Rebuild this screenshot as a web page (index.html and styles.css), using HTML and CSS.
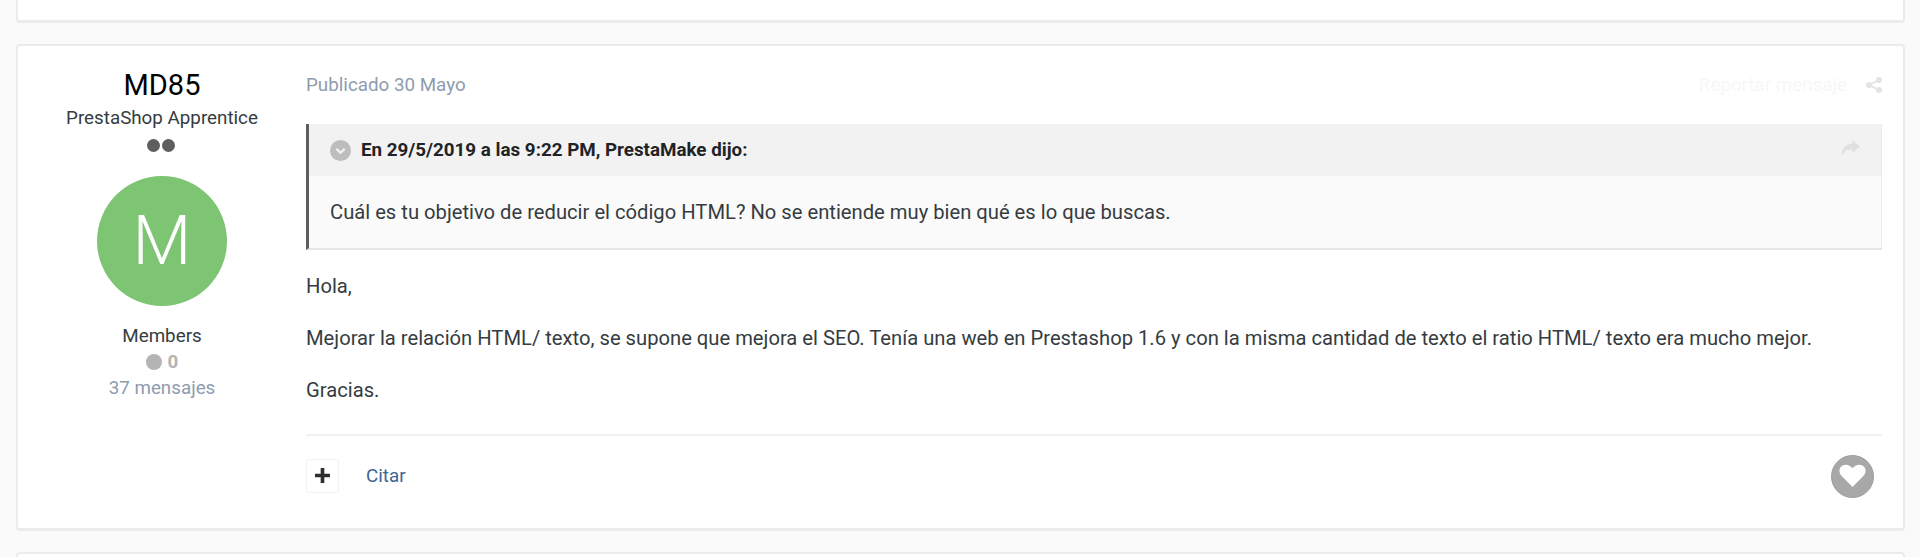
FILE: index.html
```html
<!DOCTYPE html>
<html lang="es">
<head>
<meta charset="utf-8">
<title>MD85</title>
<link rel="stylesheet" href="styles.css">
</head>
<body>
<div class="card card-stub"></div>
<article class="card post">
  <aside class="author">
    <h3 class="name">MD85</h3>
    <div class="rank">PrestaShop Apprentice</div>
    <div class="pips"><span class="pip"></span><span class="pip"></span></div>
    <div class="avatar"><span>M</span></div>
    <div class="group">Members</div>
    <div class="rep"><span class="rep-dot"></span><span>0</span></div>
    <div class="count">37 mensajes</div>
  </aside>
  <div class="main">
    <div class="meta">
      <span class="date">Publicado 30 Mayo</span>
      <div class="tools">
        <span class="report">Reportar mensaje</span>
        <svg class="share" viewBox="0 0 16 16" width="16" height="16"><circle cx="13" cy="3" r="3"/><circle cx="3" cy="8" r="3"/><circle cx="13" cy="13" r="3"/><path d="M13 3 3 8l10 5" fill="none" stroke="#e3e3e3" stroke-width="1.8"/></svg>
      </div>
    </div>
    <blockquote class="quote">
      <div class="quote-head">
        <svg class="toggle" viewBox="0 0 20 20" width="21" height="21"><circle cx="10" cy="10" r="10" fill="#bdbdbd"/><path d="M6 8.5l4 3.6 4-3.6" fill="none" stroke="#f1f1f1" stroke-width="2.2"/></svg>
        <strong class="quote-title">En 29/5/2019 a las 9:22 PM, PrestaMake dijo:</strong>
        <svg class="goto" viewBox="0 0 20 18" width="19" height="17"><path d="M12 0l8 7-8 7v-4C7 10 3 11 1 17.500 0 10 4 4 12 4z"/></svg>
      </div>
      <p class="quote-body">Cuál es tu objetivo de reducir el código HTML? No se entiende muy bien qué es lo que buscas.</p>
    </blockquote>
    <div class="content">
      <p>Hola,</p>
      <p>Mejorar la relación HTML/ texto, se supone que mejora el SEO. Tenía una web en Prestashop 1.6 y con la misma cantidad de texto el ratio HTML/ texto era mucho mejor.</p>
      <p>Gracias.</p>
    </div>
    <div class="controls">
      <div class="left">
        <span class="plus"><svg viewBox="0 0 14 14" width="15" height="15"><path d="M7 0v14M0 7h14" stroke="#2f2f2f" stroke-width="3.400" fill="none"/></svg></span>
        <a class="cite">Citar</a>
      </div>
      <span class="like"><svg viewBox="0 0 24 22" width="27" height="24"><path d="M12 21 2.500 11.500C-1 8-.5 3.500 2.500 1.600 5.500-.3 9.500.5 12 4c2.500-3.500 6.500-4.300 9.500-2.400 3 1.900 3.500 6.400 0 9.900z" fill="#fff"/></svg></span>
    </div>
  </div>
</article>
<div class="card card-next"></div>
</body>
</html>
```

FILE: styles.css
```css
* { box-sizing: border-box; }
html, body { margin: 0; height: 557px; overflow: hidden; }
body {
  background: #fafafa;
  padding: 0 15px 0 16px;
  font-family: Roboto, "Liberation Sans", sans-serif;
  color: #353c41;
  font-size: 20.200px;
}
.card {
  background: #fff;
  border: 2px solid #ebebeb;
  border-radius: 4px;
}
.card-stub {
  height: 23px;
  border-top: 0;
  border-bottom-width: 3px;
  border-radius: 0 0 4px 4px;
}
.post {
  margin-top: 21px;
  height: 487px;
  border-bottom-width: 3px;
  display: flex;
  padding: 0 21px 0 0;
}
.card-next {
  margin-top: 21px;
  height: 5px;
  border-bottom: 0;
  border-radius: 4px 4px 0 0;
}
.author {
  width: 288px;
  flex: none;
  text-align: center;
  padding-top: 20px;
  font-size: 18.800px;
}
.name {
  margin: 0;
  font-weight: 400;
  font-size: 29px;
  line-height: 38px;
  color: #000;
}
.rank { line-height: 26px; margin-top: 1px; }
.pips {
  display: flex;
  justify-content: center;
  gap: 2px;
  height: 13px;
  margin-top: 8px;
  padding-right: 2px;
}
.pip { width: 13px; height: 13px; border-radius: 50%; background: #5e5e5e; }
.avatar {
  width: 130px;
  height: 130px;
  margin: 24px auto 0;
  border-radius: 50%;
  background: #7dc473;
  color: #fff;
  font-size: 68px;
  font-weight: 300;
  display: flex;
  align-items: center;
  justify-content: center;
}
.group { margin-top: 17px; line-height: 26px; }
.rep {
  display: flex;
  justify-content: center;
  align-items: center;
  gap: 6px;
  line-height: 26px;
  color: #b4b4b4;
  font-weight: 700;
}
.rep-dot { width: 16px; height: 16px; border-radius: 50%; background: #b4b4b4; }
.count { line-height: 26px; color: #8e9cae; }
.main { flex: 1; min-width: 0; }
.meta {
  display: flex;
  justify-content: space-between;
  align-items: center;
  height: 36px;
  margin-top: 21px;
  color: #8e9cae;
  font-size: 18.800px;
}
.tools { display: flex; align-items: center; gap: 19px; }
.report { color: #f7f7f7; }
.share { fill: #e3e3e3; }
.quote {
  margin: 21px 0 0;
  border-left: 3px solid #5e5e5e;
  border-right: 1px solid #ebebeb;
  border-bottom: 2px solid #e5e5e5;
  background: #fafafa;
  height: 126px;
}
.quote-head {
  height: 52px;
  background: #f2f2f2;
  display: flex;
  align-items: center;
  padding: 0 21px;
}
.toggle { flex: none; }
.quote-title { margin-left: 10px; font-size: 18.800px; font-weight: 700; color: #1f2326; flex: 1; }
.goto { fill: #e0e0e0; margin-top: -4px; }
.quote-body { margin: 0; padding: 23px 21px 0; line-height: 26px; }
.content { padding-top: 23px; line-height: 26px; border-bottom: 2px solid #f1f1f1; height: 186px; }
.content p { margin: 0 0 26px; }
.controls {
  height: 80px;
  display: flex;
  justify-content: space-between;
  align-items: center;
  padding: 0 8px 0 0;
}
.left { display: flex; align-items: center; gap: 27px; }
.plus {
  width: 33px;
  height: 34px;
  padding-bottom: 2px;
  border: 1px solid #f3f3f3;
  border-radius: 3px;
  display: flex;
  align-items: center;
  justify-content: center;
}
.cite { color: #3d6594; font-size: 18.800px; }
.like {
  width: 43px;
  height: 43px;
  border-radius: 50%;
  background: #a8a8a8;
  border: 1px solid #9c9c9c;
  display: flex;
  align-items: center;
  justify-content: center;
}
```
